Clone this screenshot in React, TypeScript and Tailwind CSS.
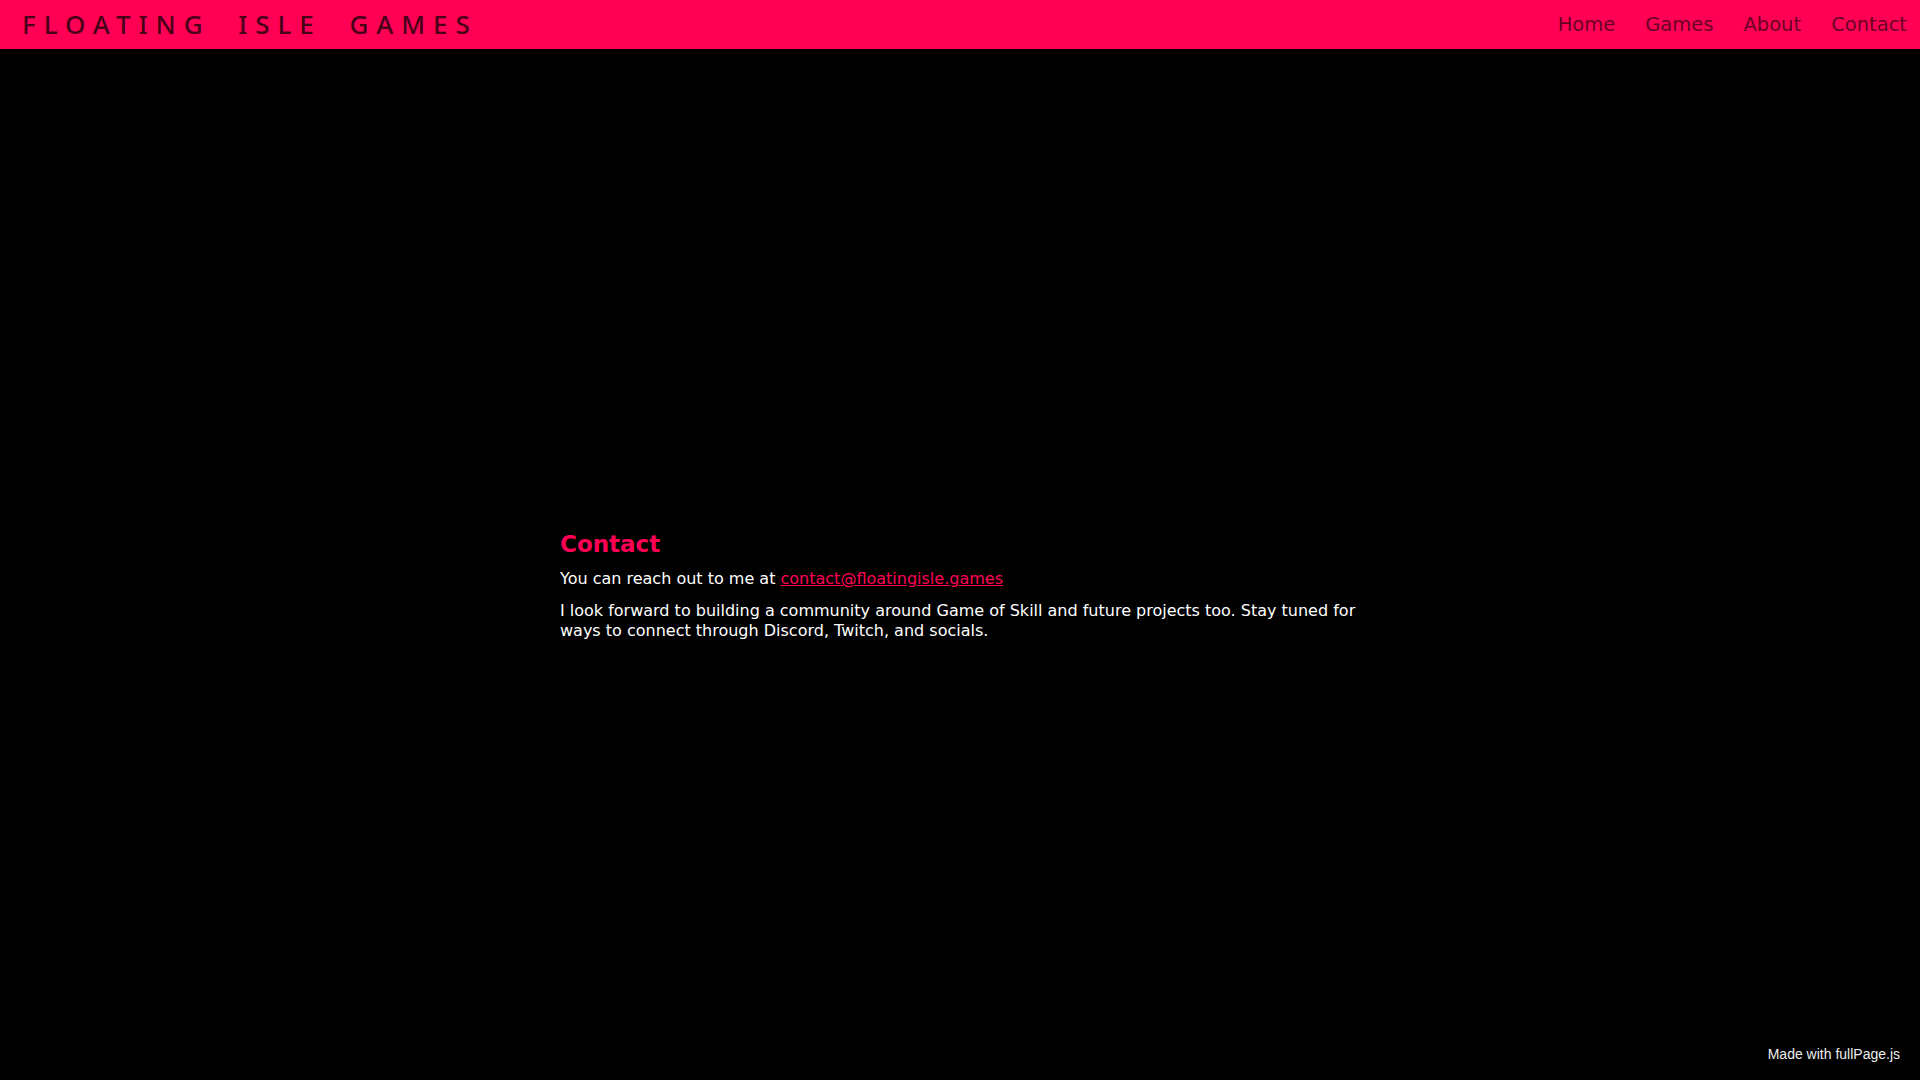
import React from "react";

const navItems = ["Home", "Games", "About", "Contact"];

const App: React.FC = () => {
  return (
    <div className="relative w-full h-[1080px] bg-black overflow-hidden">
      {/* Header */}
      <header className="h-[49px] bg-[#ff0055] flex items-center justify-between pl-[22px] pr-[13px]">
        <div className="font-['Noto_Sans',sans-serif] font-medium text-[26px] tracking-[0.305em] [word-spacing:13px] text-[#4a0019] leading-none pb-[1px]">
          FLOATING ISLE GAMES
        </div>
        <nav className="flex items-center gap-[30px] font-['DejaVu_Sans',sans-serif] text-[19.5px] text-[#6a0024]">
          {navItems.map((item) => (
            <a key={item} href="#" className="hover:text-black">
              {item}
            </a>
          ))}
        </nav>
      </header>

      {/* Contact section */}
      <main className="h-[1031px] flex items-center justify-center pt-[43px]">
        <div className="w-[800px] font-['DejaVu_Sans',sans-serif] text-white">
          <h2 className="text-[23px] font-bold text-[#ff0055] leading-[1.2] mb-[11px]">
            Contact
          </h2>
          <p className="text-[16px] leading-[1.25] mb-[12px]">
            You can reach out to me at{" "}
            <a href="#" className="text-[#ff0055] underline">
              contact@floatingisle.games
            </a>
          </p>
          <p className="text-[16px] leading-[1.25]">
            I look forward to building a community around Game of Skill and future projects too. Stay tuned for
            ways to connect through Discord, Twitch, and socials.
          </p>
        </div>
      </main>

      {/* Watermark */}
      <a
        href="#"
        className="absolute right-[20px] bottom-[15px] font-['Liberation_Sans',Arial,sans-serif] text-[14px] text-[#eeeeee]"
      >
        Made with fullPage.js
      </a>
    </div>
  );
};

export default App;
